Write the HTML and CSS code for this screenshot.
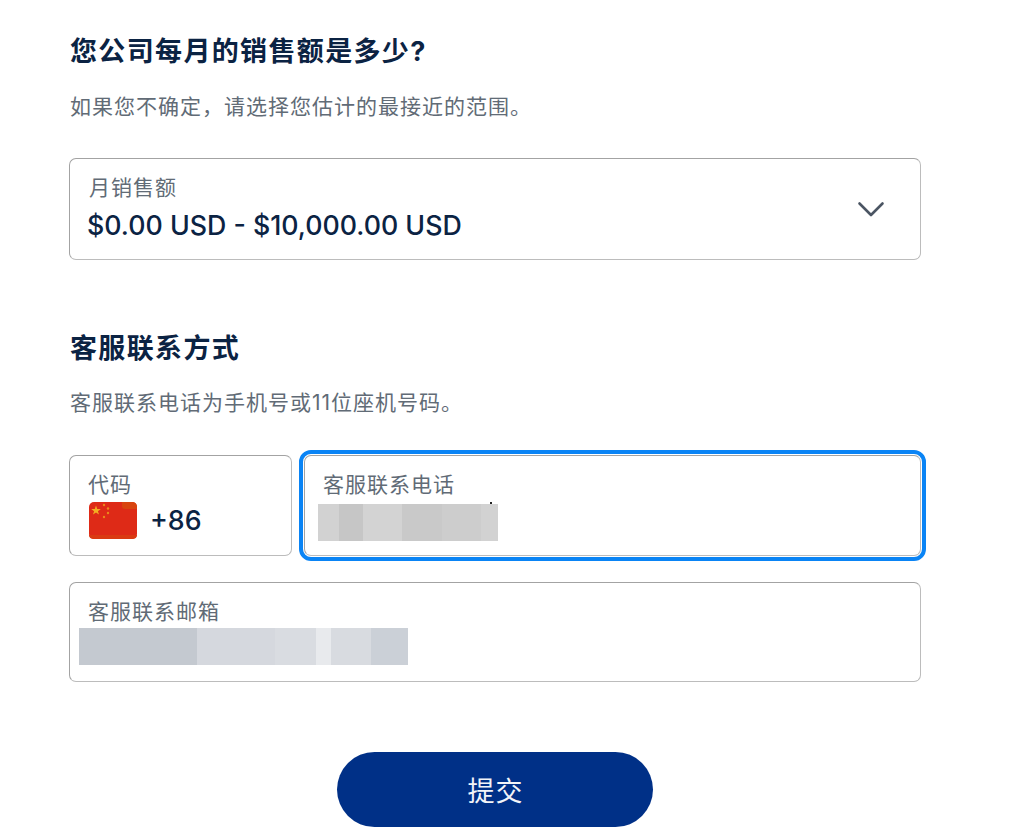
FILE: index.html
```html
<!DOCTYPE html>
<html lang="zh-CN">
<head>
  <meta charset="UTF-8" />
  <title>销售额与客服联系方式</title>
  <link rel="stylesheet" href="styles.css">
</head>
<body>
  <form class="formulaire">
    <h2 class="titre">您公司每月的销售额是多少?</h2>
    <p class="aide">如果您不确定，请选择您估计的最接近的范围。</p>

    <div class="champ champ-select">
      <div>
        <div class="libelle libelle-select">月销售额</div>
        <div class="valeur valeur-select">$0.00 USD - $10,000.00 USD</div>
      </div>
      <svg class="chevron" width="28" height="18" viewBox="0 0 28 18">
        <path d="M2.5 3.5 L14 15 L25.5 3.5" fill="none" stroke="#4b5563" stroke-width="2.6" stroke-linecap="round" stroke-linejoin="round"/>
      </svg>
    </div>

    <h2 class="titre titre-contact">客服联系方式</h2>
    <p class="aide aide-contact">客服联系电话为手机号或11位座机号码。</p>

    <div class="ligne">
      <div class="champ champ-code">
        <div class="libelle">代码</div>
        <div class="code">
          <svg class="drapeau" width="48" height="37" viewBox="0 0 48 37">
            <rect width="48" height="37" rx="5" fill="#de2a17"/>
            <path d="M33 0 H43 Q48 0 48 5 V7 H36 Q33 7 33 4 Z" fill="#d8440f"/>
            <path d="M0 33 H48 Q48 37 43 37 H5 Q0 37 0 33 Z" fill="#da3a12"/>
            <path d="M7 3.5 L8.2 6.9 L11.8 7 L8.9 9.2 L10 12.6 L7 10.6 L4 12.6 L5.1 9.2 L2.2 7 L5.8 6.9 Z" fill="#f2ae22"/>
            <circle cx="15" cy="3" r="1.2" fill="#ea8a1c"/>
            <circle cx="19" cy="6.5" r="1.2" fill="#ea8a1c"/>
            <circle cx="19" cy="11" r="1.2" fill="#ea8a1c"/>
            <circle cx="15" cy="15" r="1.2" fill="#ea8a1c"/>
          </svg>
          <span class="valeur">+86</span>
        </div>
      </div>
      <div class="champ champ-tel">
        <div class="libelle">客服联系电话</div>
        <div class="flou flou-tel"></div>
      </div>
    </div>

    <div class="champ champ-mail">
      <div class="libelle">客服联系邮箱</div>
      <div class="flou flou-mail"></div>
    </div>

    <div class="actions">
      <button class="envoyer" type="button">提交</button>
    </div>
  </form>
</body>
</html>
```

FILE: styles.css
```css
* { box-sizing: border-box; }
html, body {
  margin: 0; padding: 0;
  background: white; overflow: hidden;
  font-family: Inter, "Noto Sans CJK SC", sans-serif;
  color: #0b2343;
}
.formulaire {
  width: 852px; margin-left: 69px; padding-top: 33px;
  display: flex; flex-direction: column;
}
.titre {
  margin: 0 0 0 1px; font-size: 27px; line-height: 38px;
  font-weight: 700; letter-spacing: 1.35px;
}
.aide {
  margin: 21px 0 0 1px; font-size: 21px; line-height: 30px;
  color: #616b76; letter-spacing: 1px;
}
.titre-contact { margin-top: 70px; }
.aide-contact { margin-top: 20px; }
.champ {
  border: 1px solid #a3a3a3; border-right-color: #bcbcbc; border-bottom-color: #bcbcbc;
  border-radius: 7px; background: white; height: 102px;
}
.champ-select {
  margin-top: 36px; padding: 15px 35px 0 18px;
  display: flex; justify-content: space-between;
}
.libelle {
  font-size: 21px; line-height: 28px; color: #616b76;
  letter-spacing: 1px;
}
.libelle-select { margin-left: 1px; }
.valeur { font-size: 26.75px; line-height: 38px; font-weight: 500; }
.valeur-select { margin: 4px 0 0 -1px; }
.chevron { margin-top: 26px; }
.ligne { display: flex; gap: 12px; margin-top: 37px; }
.champ-code { width: 223px; height: 101px; padding: 15px 18px 0; }
.code { display: flex; align-items: center; gap: 13px; margin: 2px 0 0 1px; }
.drapeau { display: block; filter: blur(0.4px); }
.champ-tel {
  flex: 1; height: 101px; padding: 15px 18px 0;
  outline: 4px solid #0a84f5; outline-offset: 1.5px;
  position: relative;
}
.flou { height: 37px; margin-top: 5px; }
.flou-tel {
  width: 180px; margin-left: -5px;
  background: linear-gradient(to right,
    #d2d2d2 0 21px, #c6c6c6 21px 45px, #d3d3d3 45px 84px,
    #c9c9c9 84px 124px, #cdcdcd 124px 163px, #d2d2d2 163px);
}
.champ-tel::after {
  content: ""; position: absolute; left: 185px; top: 46px;
  width: 2px; height: 2px; background: #222;
}
.champ-mail { margin-top: 26px; padding: 15px 18px 0; height: 100px; }
.champ-mail .flou { margin-top: 2px; }
.flou-mail {
  width: 329px; margin-left: -9px;
  background: linear-gradient(to right,
    #c4c9d0 0 118px, #d5d8de 118px 196px, #d9dce1 196px 237px,
    #e8eaed 237px 252px, #d8dbe0 252px 292px, #cbd0d7 292px);
}
.actions { display: flex; justify-content: center; margin-top: 70px; margin-left: -1px; }
.envoyer {
  width: 316px; height: 75px; border: none; border-radius: 38px;
  background: #003087; color: #f2f4f8; font-family: inherit;
  font-size: 27px; letter-spacing: 1px; padding: 0 0 0 2px;
}
```
